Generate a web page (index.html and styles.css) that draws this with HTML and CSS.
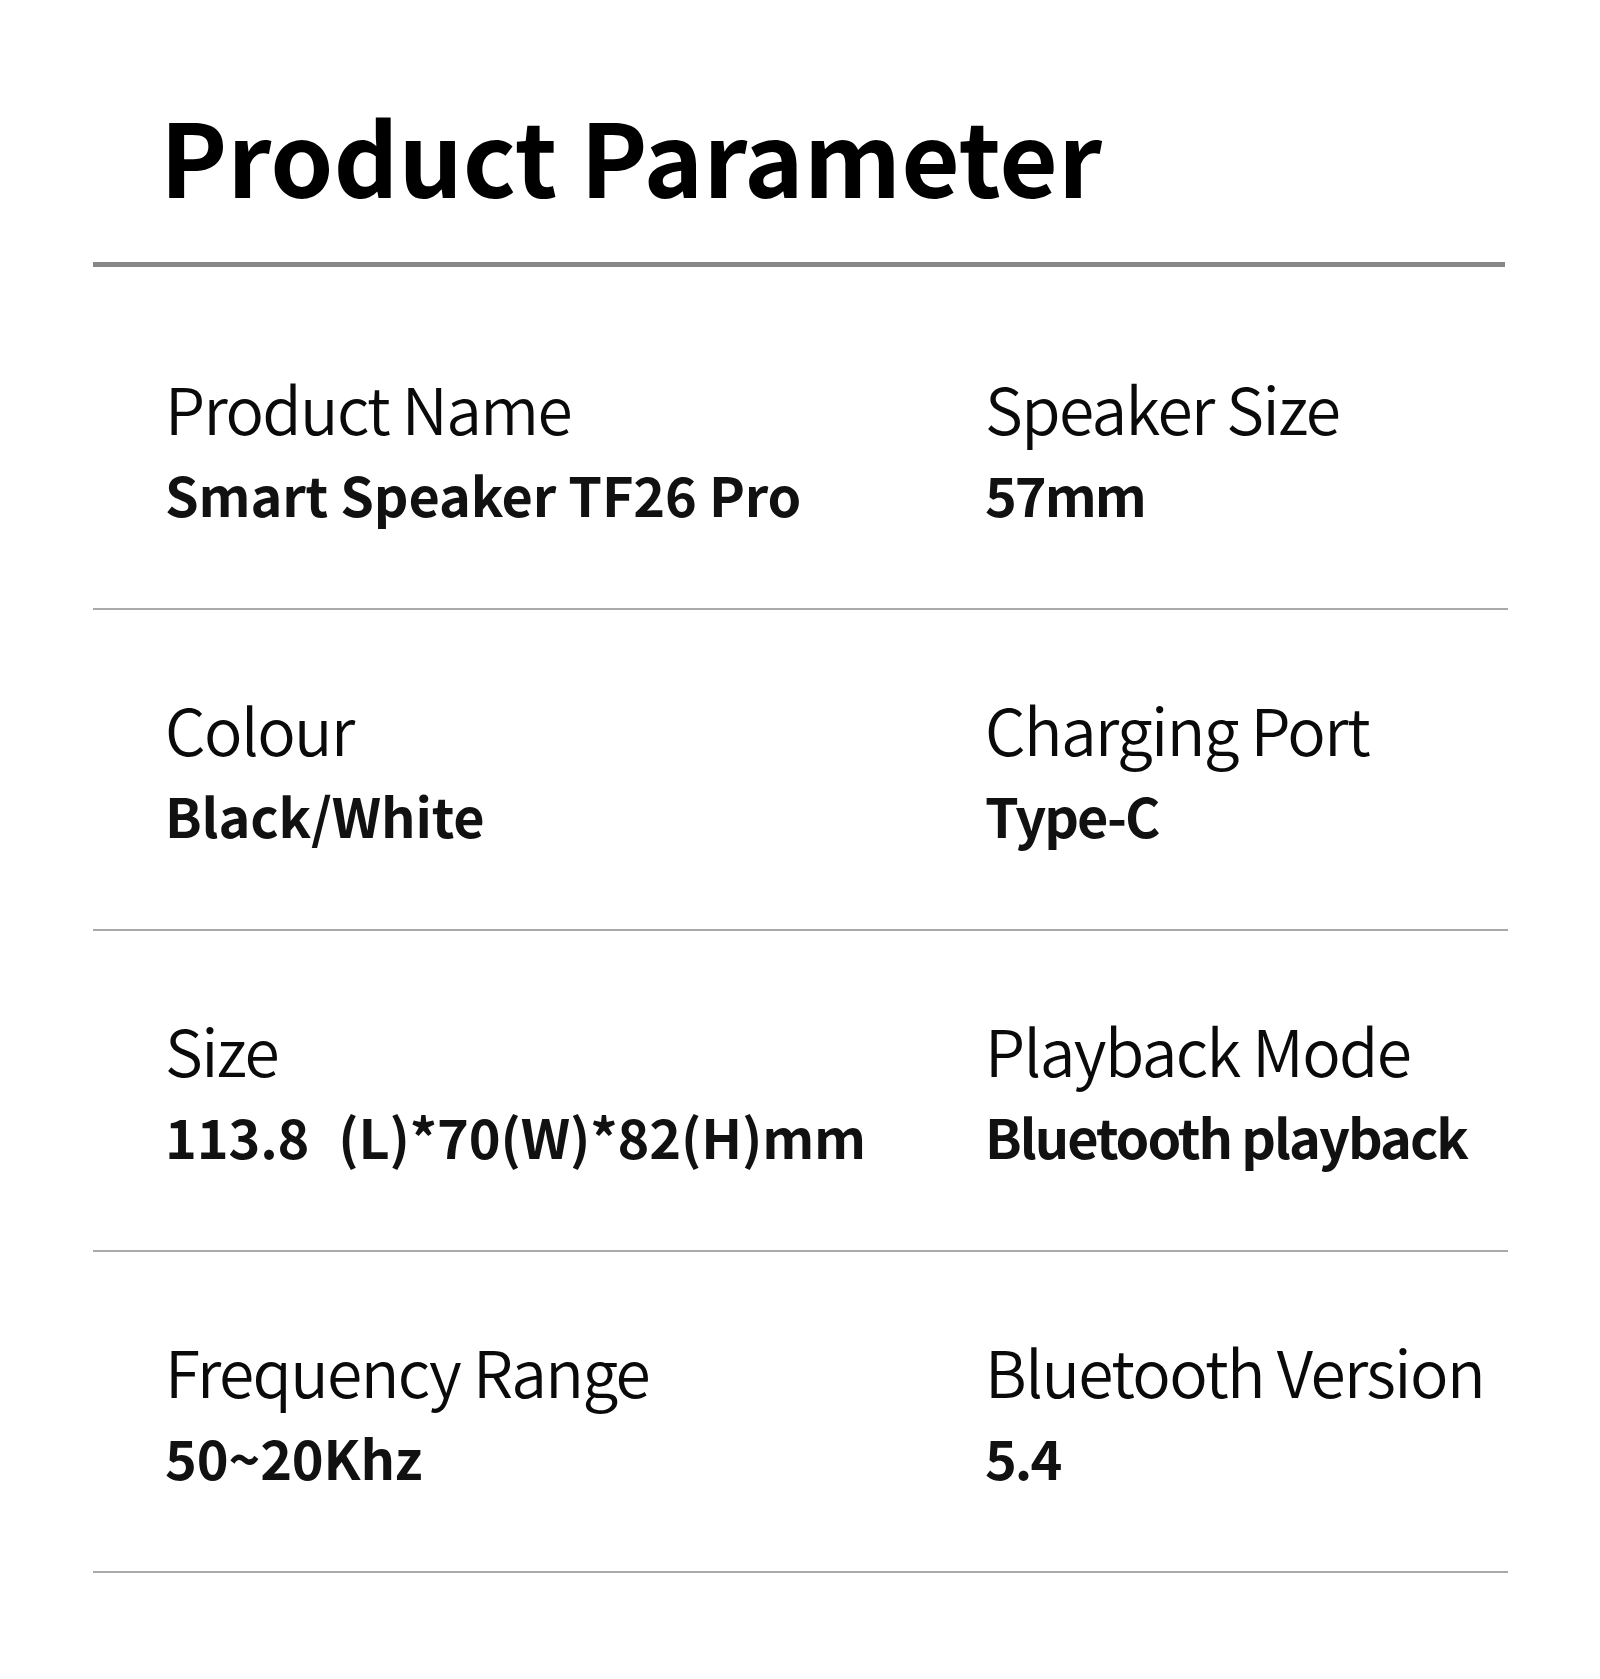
FILE: index.html
```html
<!DOCTYPE html>
<html lang="en">
<head>
<meta charset="utf-8">
<title>Product Parameter</title>
<link rel="stylesheet" href="styles.css">
</head>
<body>
<main class="page">
  <header class="head">
    <h1 class="title">Product Parameter</h1>
    <div class="rule-thick"></div>
  </header>
  <section class="table">
    <div class="row">
      <div class="cell"><div class="label">Product Name</div><div class="value">Smart Speaker TF26 Pro</div></div>
      <div class="cell"><div class="label">Speaker Size</div><div class="value">57mm</div></div>
    </div>
    <div class="row">
      <div class="cell"><div class="label">Colour</div><div class="value">Black/White</div></div>
      <div class="cell"><div class="label">Charging Port</div><div class="value">Type-C</div></div>
    </div>
    <div class="row">
      <div class="cell"><div class="label">Size</div><div class="value">113.8<span class="gap"></span>(L)*70(W)*82(H)mm</div></div>
      <div class="cell"><div class="label">Playback Mode</div><div class="value">Bluetooth playback</div></div>
    </div>
    <div class="row">
      <div class="cell"><div class="label">Frequency Range</div><div class="value">50~20Khz</div></div>
      <div class="cell"><div class="label">Bluetooth Version</div><div class="value">5.4</div></div>
    </div>
  </section>
</main>
</body>
</html>
```

FILE: styles.css
```css
html, body {
  margin: 0;
  padding: 0;
  background: #ffffff;
}
body {
  font-family: "Noto Sans CJK SC", "Noto Sans", sans-serif;
  color: #000;
}
.page {
  width: 1600px;
  height: 1679px;
  padding-top: 104px;
  box-sizing: border-box;
}
.head {
  padding-left: 93px;
  padding-right: 95px;
}
.title {
  margin: 0 0 57px 0;
  padding-left: 67px;
  font-size: 101px;
  line-height: 1;
  font-weight: 700;
  letter-spacing: 0;
}
.rule-thick {
  height: 5px;
  width: 1412px;
  background: #878787;
}
.table {
  margin-top: 22px;
  margin-left: 93px;
  width: 1415px;
}
.row {
  display: grid;
  grid-template-columns: 820px 1fr;
  padding: 86px 0 87px 72px;
  border-bottom: 2px solid #a9a9a9;
}
.cell {
  white-space: nowrap;
}
.label {
  font-size: 64px;
  line-height: 1;
  font-weight: 350;
  letter-spacing: -1.6px;
  color: #0a0a0a;
}
.value {
  margin-top: 28px;
  font-size: 54px;
  line-height: 1;
  font-weight: 700;
  letter-spacing: -0.15px;
  color: #111;
}
.cell + .cell .value {
  letter-spacing: -2px;
}
.gap {
  display: inline-block;
  width: 29px;
}
```
